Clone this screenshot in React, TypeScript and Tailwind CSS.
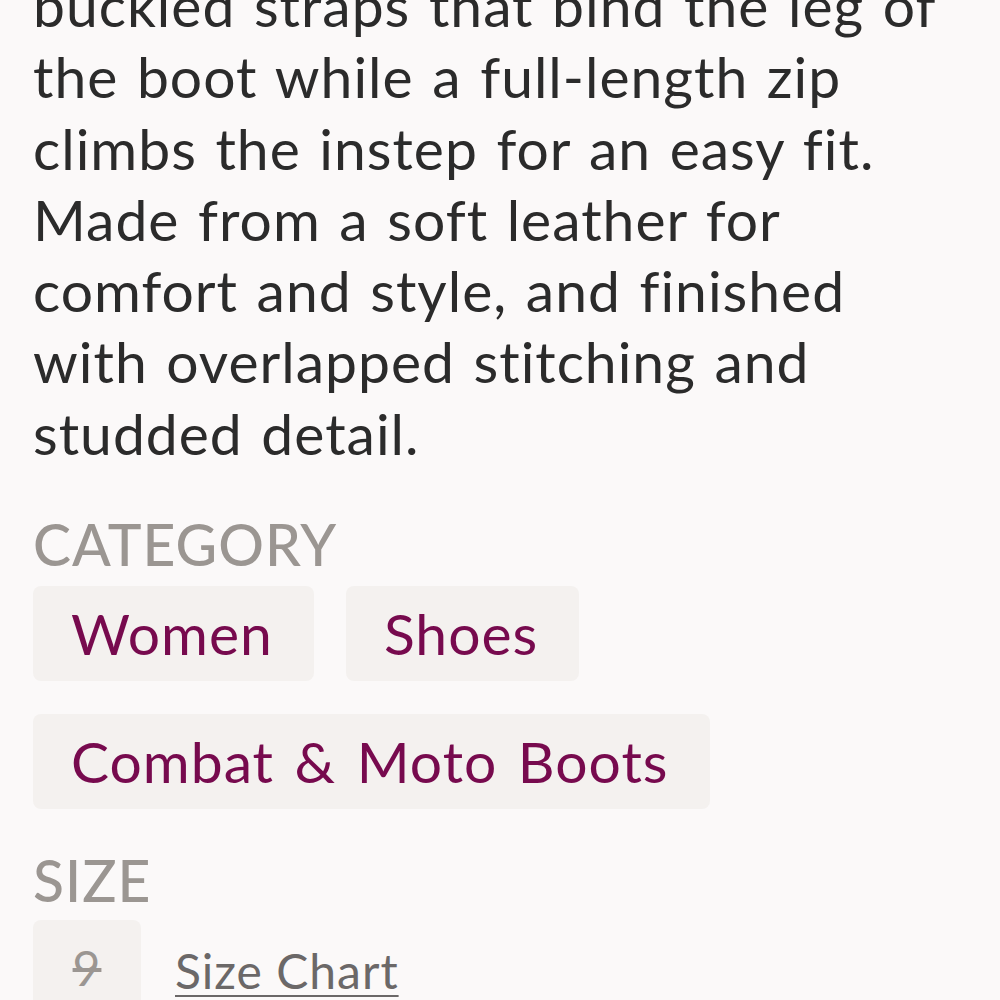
const categories = ["Women", "Shoes", "Combat & Moto Boots"];

const description = [
  "buckled straps that bind the leg of",
  "the boot while a full-length zip",
  "climbs the instep for an easy fit.",
  "Made from a soft leather for",
  "comfort and style, and finished",
  "with overlapped stitching and",
  "studded detail.",
];

export default function App() {
  return (
    <div
      className="min-h-[1000px] bg-[#fbf9f9] px-[33px] overflow-hidden tracking-[1px]"
      style={{ fontFamily: "Lato, 'Open Sans', sans-serif" }}
    >
      <p className="-mt-[30px] text-[57px] leading-[71.3px] text-[#2b2b2b] [word-spacing:3px]">
        {description.map((line) => (
          <span key={line} className="block whitespace-nowrap">
            {line}
          </span>
        ))}
      </p>

      <h3 className="mt-[40px] text-[57px] leading-[71px] font-medium uppercase text-[#9b9692]">
        Category
      </h3>
      <div className="mt-[6px] flex flex-wrap gap-x-[32px] gap-y-[33px]">
        {categories.map((c) => (
          <a
            key={c}
            href="#"
            className="flex h-[95px] items-center rounded-[8px] bg-[#f4f1ef] pl-[38px] pr-[41px] text-[57px] text-[#770a4e] [word-spacing:5px]"
          >
            {c}
          </a>
        ))}
      </div>

      <h3 className="mt-[36px] text-[57px] leading-[71px] font-medium uppercase text-[#9b9692]">
        Size
      </h3>
      <div className="mt-[4px] flex items-center gap-[34px]">
        <span className="flex h-[95px] w-[108px] items-center justify-center rounded-[8px] bg-[#f4f1ef] text-[48px] text-[#9b9692] line-through">
          9
        </span>
        <a
          href="#"
          className="pt-[6px] text-[48px] text-[#6b6868] underline decoration-2 underline-offset-[6px]"
        >
          Size Chart
        </a>
      </div>
    </div>
  );
}
